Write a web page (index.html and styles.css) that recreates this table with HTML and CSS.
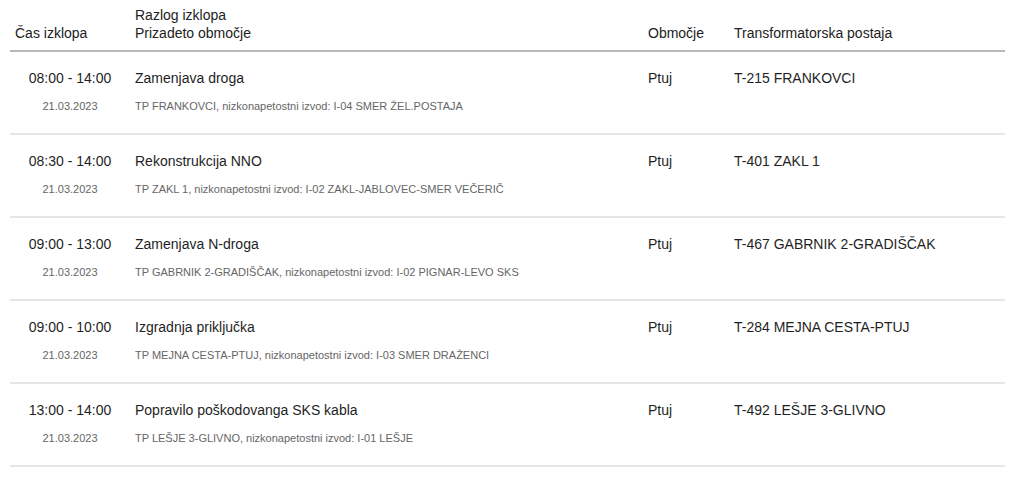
FILE: index.html
```html
<!DOCTYPE html>
<html lang="sl">
<head>
<meta charset="utf-8">
<title>Izklopi</title>
<link rel="stylesheet" href="styles.css">
</head>
<body>
<div class="table">
  <div class="row head">
    <div class="cell c1">Čas izklopa</div>
    <div class="cell c2">Razlog izklopa<br>Prizadeto območje</div>
    <div class="cell c3">Območje</div>
    <div class="cell c4">Transformatorska postaja</div>
  </div>
  <div class="row">
    <div class="cell c1"><div class="main">08:00 - 14:00</div><div class="sub">21.03.2023</div></div>
    <div class="cell c2"><div class="main">Zamenjava droga</div><div class="sub">TP FRANKOVCI, nizkonapetostni izvod: I-04 SMER ŽEL.POSTAJA</div></div>
    <div class="cell c3"><div class="main">Ptuj</div></div>
    <div class="cell c4"><div class="main">T-215 FRANKOVCI</div></div>
  </div>
  <div class="row">
    <div class="cell c1"><div class="main">08:30 - 14:00</div><div class="sub">21.03.2023</div></div>
    <div class="cell c2"><div class="main">Rekonstrukcija NNO</div><div class="sub">TP ZAKL 1, nizkonapetostni izvod: I-02 ZAKL-JABLOVEC-SMER VEČERIČ</div></div>
    <div class="cell c3"><div class="main">Ptuj</div></div>
    <div class="cell c4"><div class="main">T-401 ZAKL 1</div></div>
  </div>
  <div class="row">
    <div class="cell c1"><div class="main">09:00 - 13:00</div><div class="sub">21.03.2023</div></div>
    <div class="cell c2"><div class="main">Zamenjava N-droga</div><div class="sub">TP GABRNIK 2-GRADIŠČAK, nizkonapetostni izvod: I-02 PIGNAR-LEVO SKS</div></div>
    <div class="cell c3"><div class="main">Ptuj</div></div>
    <div class="cell c4"><div class="main">T-467 GABRNIK 2-GRADIŠČAK</div></div>
  </div>
  <div class="row">
    <div class="cell c1"><div class="main">09:00 - 10:00</div><div class="sub">21.03.2023</div></div>
    <div class="cell c2"><div class="main">Izgradnja priključka</div><div class="sub">TP MEJNA CESTA-PTUJ, nizkonapetostni izvod: I-03 SMER DRAŽENCI</div></div>
    <div class="cell c3"><div class="main">Ptuj</div></div>
    <div class="cell c4"><div class="main">T-284 MEJNA CESTA-PTUJ</div></div>
  </div>
  <div class="row">
    <div class="cell c1"><div class="main">13:00 - 14:00</div><div class="sub">21.03.2023</div></div>
    <div class="cell c2"><div class="main">Popravilo poškodovanga SKS kabla</div><div class="sub">TP LEŠJE 3-GLIVNO, nizkonapetostni izvod: I-01 LEŠJE</div></div>
    <div class="cell c3"><div class="main">Ptuj</div></div>
    <div class="cell c4"><div class="main">T-492 LEŠJE 3-GLIVNO</div></div>
  </div>
</div>
</body>
</html>
```
FILE: styles.css
```css
html, body {
  margin: 0;
  padding: 0;
  background: #fff;
}
body {
  font-family: Arial, "Liberation Sans", sans-serif;
  font-size: 14px;
  color: #222;
}
.table {
  margin: 0 15px 0 10px;
}
.row {
  display: grid;
  grid-template-columns: 120px 513px 86px 1fr;
  border-bottom: 2px solid #e6e6e6;
}
.row.head {
  border-bottom: 2px solid #b8b8b8;
  align-items: end;
}
.head .cell {
  padding: 6px 5px 8px;
  line-height: 18px;
}
.cell {
  padding: 17px 5px 18px;
}
.row:not(.head) .c1 {
  text-align: center;
}
.main {
  line-height: 18px;
  color: #1f1f1f;
}
.sub {
  margin-top: 10px;
  font-size: 11px;
  line-height: 18px;
  color: #666;
}
```
